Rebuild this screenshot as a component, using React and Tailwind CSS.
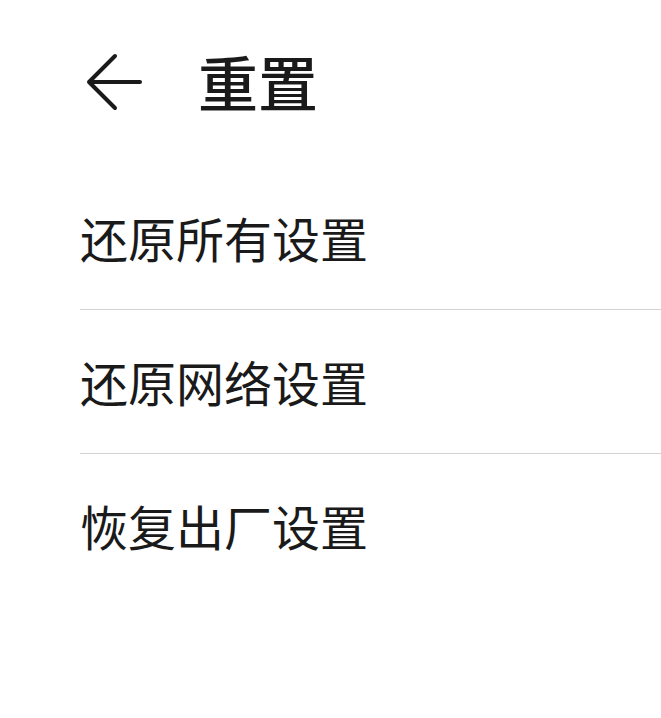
export default function App() {
  const items = ['还原所有设置', '还原网络设置', '恢复出厂设置'];

  return (
    <div
      className="min-h-screen bg-white text-[#1a1a1a]"
      style={{ fontFamily: '"Noto Sans CJK SC", "Noto Sans", sans-serif' }}
    >
      <header className="h-[166px] flex items-center pl-[83px]">
        <button className="w-[64px] h-[64px] -mt-[3px]">
          <svg width="64" height="64" viewBox="0 0 64 64" fill="none" stroke="#1a1a1a" strokeWidth="4" strokeLinecap="round" strokeLinejoin="round">
            <path d="M6 32 L32 6 M6 32 L32 58 M6 32 H57" />
          </svg>
        </button>
        <h1 className="ml-[51px] -mt-[4px] text-[60px] font-medium leading-none">重置</h1>
      </header>

      <ul className="ml-[80px]">
        {items.map((label, i) => (
          <li
            key={label}
            className={`h-[144px] flex items-center ${i < items.length - 1 ? 'border-b border-[#d3d3d3]' : ''}`}
          >
            <span className="text-[48px] leading-none -mt-[2px]">{label}</span>
          </li>
        ))}
      </ul>
    </div>
  );
}
